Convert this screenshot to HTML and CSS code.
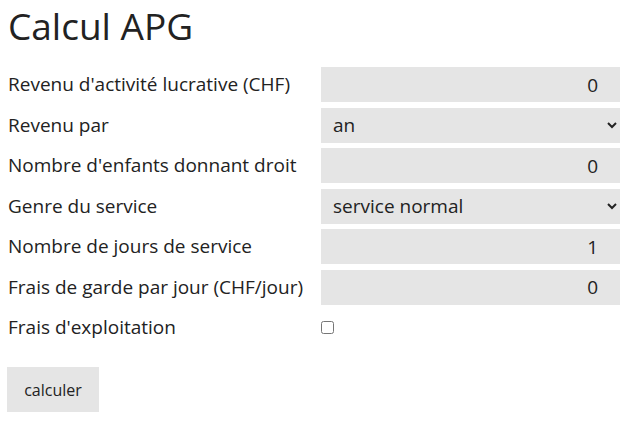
FILE: index.html
```html
<!DOCTYPE html>
<html lang="fr">
<head>
    <meta charset="UTF-8">
    <meta name="viewport" content="width=device-width, initial-scale=1.0">
    <title>Calcul APG</title>
    <link rel="stylesheet" href="styles.css">
</head>
<body>
    <h1>Calcul APG</h1>

    <form class="apg-form" onsubmit="return false;">
        <div class="form-grid">
            <label for="revenu">Revenu d'activité lucrative (CHF)</label>
            <input type="number" id="revenu" value="0">

            <label for="periode">Revenu par</label>
            <select id="periode">
                <option>an</option>
                <option>mois</option>
                <option>jour</option>
            </select>

            <label for="enfants">Nombre d'enfants donnant droit</label>
            <input type="number" id="enfants" value="0">

            <label for="genre">Genre du service</label>
            <select id="genre">
                <option>service normal</option>
                <option>école de recrues</option>
                <option>service d'avancement</option>
            </select>

            <label for="jours">Nombre de jours de service</label>
            <input type="number" id="jours" value="1">

            <label for="garde">Frais de garde par jour (CHF/jour)</label>
            <input type="number" id="garde" value="0">

            <label for="exploitation">Frais d'exploitation</label>
            <div class="check-cell">
                <input type="checkbox" id="exploitation">
            </div>
        </div>

        <button type="submit" class="btn-calc">calculer</button>
    </form>
</body>
</html>
```

FILE: styles.css
```css
body {
    margin: 0;
    padding: 0 8px;
    font-family: 'Open Sans', 'Noto Sans', sans-serif;
    font-size: 19px;
    color: #222;
    background: #fff;
}

h1 {
    margin: 0;
    font-size: 37px;
    font-weight: 400;
    line-height: normal;
    color: #222;
}

.apg-form {
    margin-top: 16px;
}

.form-grid {
    display: grid;
    grid-template-columns: 313px 299px;
    row-gap: 5.5px;
    align-items: center;
}

.form-grid label {
    line-height: 35px;
    white-space: nowrap;
}

.form-grid input[type="number"],
.form-grid select {
    box-sizing: border-box;
    width: 100%;
    height: 35px;
    margin: 0;
    border: none;
    border-radius: 0;
    background: #e5e5e5;
    font-family: inherit;
    font-size: 19px;
    color: #222;
}

.form-grid input[type="number"] {
    padding: 0 22px 0 10px;
    text-align: right;
    -moz-appearance: textfield;
    appearance: textfield;
}

.form-grid input[type="number"]::-webkit-inner-spin-button,
.form-grid input[type="number"]::-webkit-outer-spin-button {
    -webkit-appearance: none;
    margin: 0;
}

.form-grid select {
    padding: 0 8px 0 8px;
}

.check-cell {
    height: 30px;
    display: flex;
    align-items: center;
}

.check-cell input {
    width: 13px;
    height: 13px;
    margin: 0;
}

.btn-calc {
    margin-top: 22px;
    margin-left: -1px;
    width: 92px;
    height: 45px;
    border: none;
    border-radius: 0;
    background: #e5e5e5;
    font-family: inherit;
    font-size: 16px;
    color: #222;
    cursor: pointer;
}
```
